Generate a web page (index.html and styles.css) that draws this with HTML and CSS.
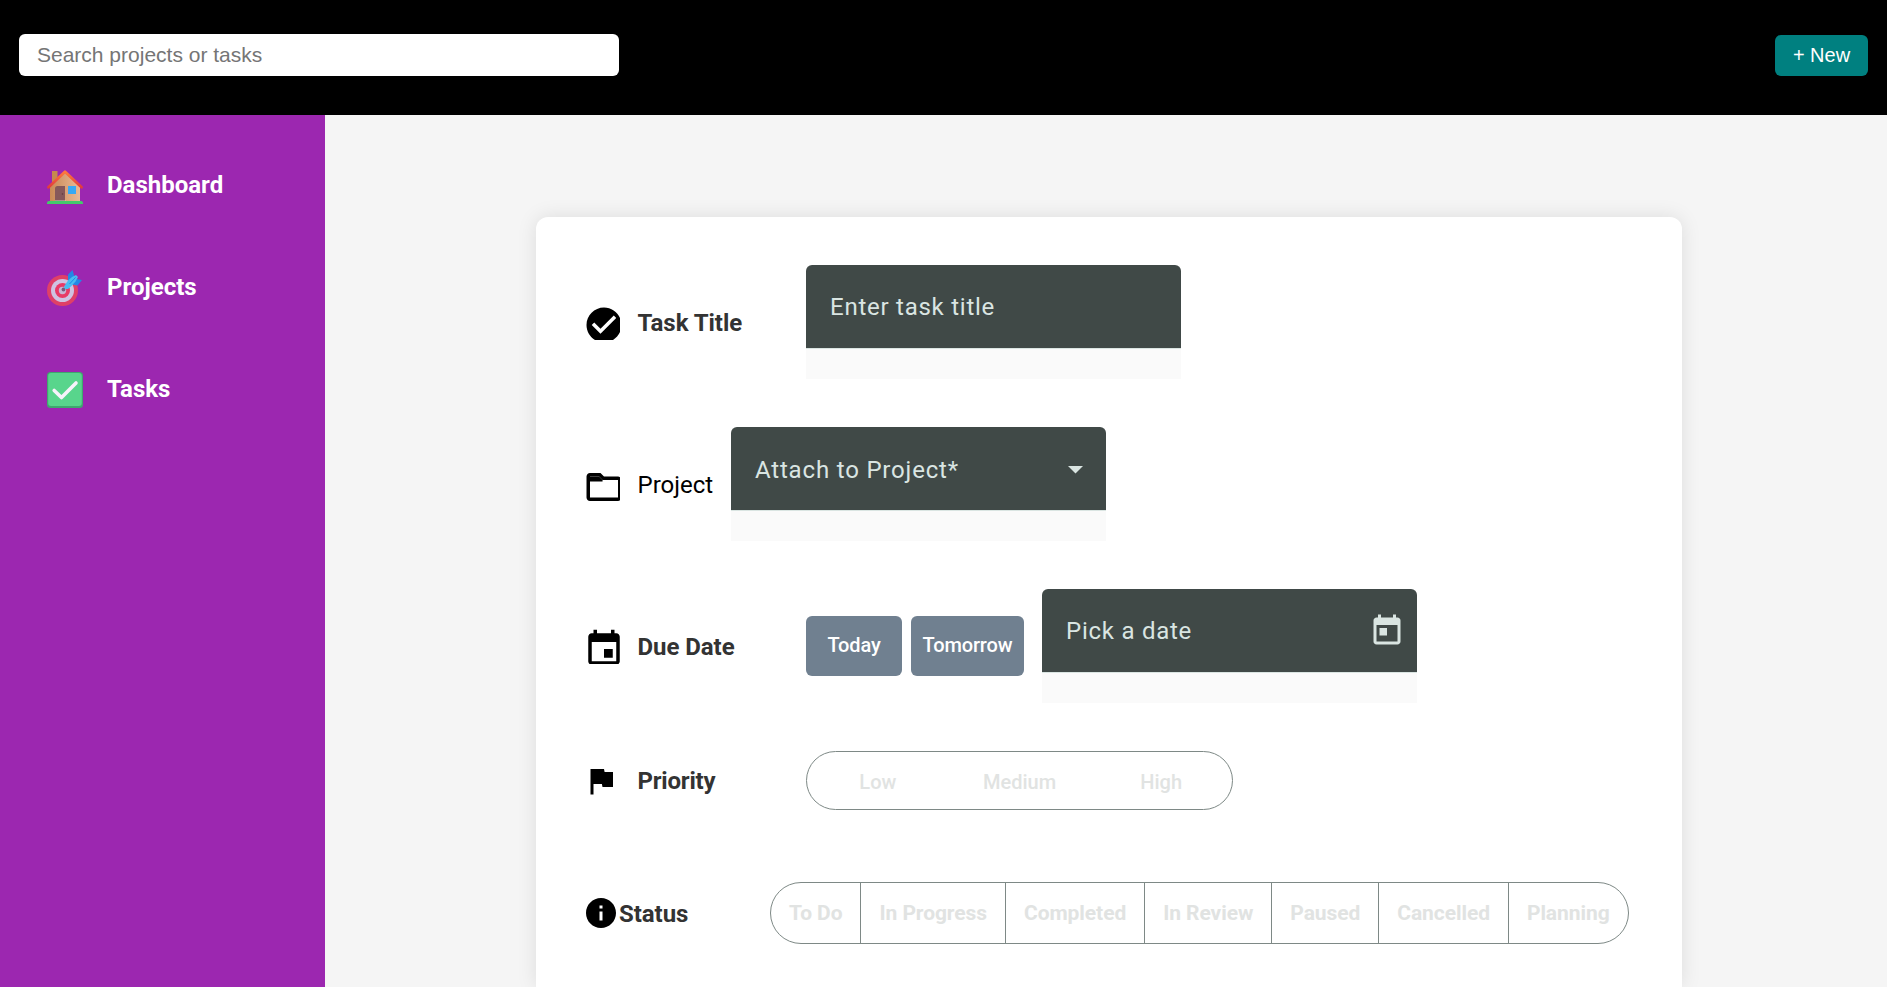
FILE: index.html
```html
<!DOCTYPE html>
<html lang="en">
<head>
<meta charset="utf-8">
<title>New Task</title>
<link rel="stylesheet" href="styles.css">
</head>
<body>
<header class="topbar">
  <input class="search" type="text" placeholder="Search projects or tasks">
  <button class="new-btn">+ New</button>
</header>
<div class="layout">
  <nav class="sidebar">
    <a class="nav-item">
      <svg class="nav-icon nav-home" viewBox="0 0 36 36">
        <defs>
          <linearGradient id="wall" x1="0" x2="1"><stop offset="0" stop-color="#c98a55"/><stop offset="1" stop-color="#eab996"/></linearGradient>
          <linearGradient id="roof" x1="0" x2="0" y1="0" y2="1"><stop offset="0" stop-color="#ff7a3c"/><stop offset="1" stop-color="#e23b3b"/></linearGradient>
        </defs>
        <rect x="5" y="2" width="5.500" height="13" fill="#c68a4e"/>
        <path d="M3 33V17L18 4l15 13v16z" fill="url(#wall)"/>
        <path d="M1.500 18.200L18 2.800l16.500 15.400" fill="none" stroke="url(#roof)" stroke-width="2.800" stroke-linecap="round" stroke-linejoin="round"/>
        <path d="M8 32V19.500Q8 17 10.500 17H18v15z" fill="#86595a"/>
        <circle cx="15.500" cy="25" r=".8" fill="#5c3a3c"/>
        <rect x="21" y="17" width="8" height="8" fill="#38a9f4"/>
        <path d="M8 31.500h11v1H8z" fill="#d9c9c4"/>
        <path d="M0 35v-1q0-2 2-2h32q2 0 2 2v1z" fill="#44c96b"/>
      </svg>
      <span>Dashboard</span>
    </a>
    <a class="nav-item">
      <svg class="nav-icon" viewBox="0 0 36 36">
        <circle cx="15.500" cy="20.500" r="15.500" fill="#df4067"/>
        <circle cx="15.500" cy="20.500" r="11.500" fill="#cfc3e2"/>
        <circle cx="15.500" cy="20.500" r="7.500" fill="#e83a66"/>
        <circle cx="15.500" cy="20.500" r="3.700" fill="#c8b5d4"/>
        <circle cx="16.500" cy="19.500" r="1.900" fill="#77597d"/>
        <path d="M21 11V4.500L25.500 0l2 7L22 14z" fill="#2487e5"/>
        <path d="M25 14.500L29.500 9l5.500 1-4.500 5.500z" fill="#2487e5"/>
        <path d="M17 16.500L21 10.500 25 7l4-2 2 2-2.500 4.500-4 4.500-3.500 3h-3z" fill="#4abcf1"/>
        <path d="M22.500 14l6-6.500" stroke="#1b8be8" stroke-width="1"/>
      </svg>
      <span>Projects</span>
    </a>
    <a class="nav-item">
      <svg class="nav-icon" viewBox="0 0 36 36">
        <rect width="36" height="36" rx="3.500" fill="#3fa66f"/>
        <rect x="1.200" y="1" width="33.600" height="33" rx="3" fill="#58d58c"/>
        <path d="M7.200 18.500l7.300 7 14.500-14.500" fill="none" stroke="#f7f2fb" stroke-width="3.600" stroke-linecap="round" stroke-linejoin="round"/>
      </svg>
      <span>Tasks</span>
    </a>
  </nav>
  <main class="content">
    <form class="card">
      <div class="row">
        <span class="icon"><svg class="glyph glyph-lg" viewBox="0 0 24 24"><path d="M12 2C6.480 2 2 6.480 2 12s4.480 10 10 10 10-4.480 10-10S17.520 2 12 2zm-2 15l-5-5 1.410-1.410L10 14.170l7.590-7.590L19 8l-9 9z"/></svg></span>
        <span class="label">Task Title</span>
        <div class="field"><div class="field-box"><span>Enter task title</span></div><div class="field-hint"></div></div>
      </div>
      <div class="row">
        <span class="icon"><svg class="glyph glyph-lg" viewBox="0 0 24 24"><path d="M9.170 6l2 2H20v10H4V6h5.170M10 4H4c-1.100 0-1.990.9-1.990 2L2 18c0 1.100.9 2 2 2h16c1.100 0 2-.9 2-2V8c0-1.100-.9-2-2-2h-8l-2-2z"/><path d="M4 6h5.170l2 2v.9H4z"/></svg></span>
        <span class="label label-plain">Project</span>
        <div class="field"><div class="field-box field-select"><span>Attach to Project*</span><svg class="arrow" viewBox="0 0 15 8"><path d="M0 0h15L7.500 7.500z"/></svg></div><div class="field-hint"></div></div>
      </div>
      <div class="row">
        <span class="icon"><svg class="glyph glyph-lg" viewBox="0 0 24 24"><path d="M17 12h-5v5h5v-5zM16 1v2H8V1H6v2H5c-1.110 0-1.990.9-1.990 2L3 19c0 1.100.89 2 2 2h14c1.100 0 2-.9 2-2V5c0-1.100-.9-2-2-2h-1V1h-2zm3 18H5V8h14v11z"/></svg></span>
        <span class="label label-due">Due Date</span>
        <div class="quick">
          <button type="button" class="day day-today">Today</button>
          <button type="button" class="day day-tomorrow">Tomorrow</button>
        </div>
        <div class="field"><div class="field-box field-date"><span>Pick a date</span><svg class="today" viewBox="0 0 24 24"><path d="M19 3h-1V1h-2v2H8V1H6v2H5c-1.110 0-1.990.9-1.990 2L3 19c0 1.100.89 2 2 2h14c1.100 0 2-.9 2-2V5c0-1.100-.9-2-2-2zm0 16H5V8h14v11zM7 10h5v5H7z"/></svg></div><div class="field-hint"></div></div>
      </div>
      <div class="row row-priority">
        <span class="icon"><svg class="glyph" viewBox="0 0 24 24"><path d="M14.400 6L14 4H5v17h2v-7h5.600l.4 2h7V6z"/></svg></span>
        <span class="label label-priority">Priority</span>
        <div class="pill priority"><span>Low</span><span>Medium</span><span>High</span></div>
      </div>
      <div class="row row-status">
        <span class="icon icon-tight"><svg class="glyph" viewBox="0 0 24 24"><path d="M12 2C6.480 2 2 6.480 2 12s4.480 10 10 10 10-4.480 10-10S17.520 2 12 2zm1 15h-2v-6h2v6zm0-8h-2V7h2v2z"/></svg></span>
        <span class="label label-status">Status</span>
        <div class="pill status"><span>To Do</span><span>In Progress</span><span>Completed</span><span>In Review</span><span>Paused</span><span>Cancelled</span><span>Planning</span></div>
      </div>
    </form>
  </main>
</div>
</body>
</html>
```
FILE: styles.css
```css
* { box-sizing: border-box; }
body { margin: 0; height: 987px; overflow: hidden; background: #f4f4f4; font-family: Roboto, sans-serif; font-size: 24px; }
.topbar { display: flex; align-items: center; justify-content: space-between; height: 115px; padding: 0 19px 5px; background: #000; }
.search { width: 600px; height: 42px; padding: 0 18px; border: 0; border-radius: 6px; background: #fff; font: 21px "Liberation Sans", Arial, sans-serif; }
.search::placeholder { color: #757575; }
.new-btn { width: 93px; height: 41px; padding: 0; border: 0; border-radius: 6px; background: #008080; color: #fff; font: 20px "Liberation Sans", Arial, sans-serif; }
.layout { display: flex; height: 872px; }
.sidebar { width: 325px; flex: none; padding: 36px 0 0 47px; background: #9c27b0; }
.nav-item { display: flex; align-items: center; gap: 24px; height: 68px; margin-bottom: 34px; color: #fff; font-weight: 700; }
.nav-icon { width: 36px; height: 36px; margin-top: 2px; fill: none; }
.nav-home { margin-top: 4px; }
.content { flex: 1; padding: 102px 0 0 211px; background: #f5f5f5; }
.card { width: 1146px; height: 770px; padding: 48px 0 0 47px; border-radius: 12px 12px 0 0; background: #fff; box-shadow: 0 0 20px rgba(0,0,0,.1); }
.row { display: flex; align-items: center; height: 114px; margin-bottom: 48px; }
.icon { width: 37px; height: 36px; flex: none; overflow: hidden; margin-right: 17.500px; }
.icon-tight { width: 36px; margin-right: 0; }
.glyph { display: block; width: 36px; height: 36px; fill: #000; }
.glyph-lg { width: 42px; height: 42px; margin-left: .4px; }
.label { width: 168.500px; padding-top: 2px; flex: none; color: #333; font-weight: 700; letter-spacing: -.05px; white-space: nowrap; }
.label-plain { width: 93.500px; color: #000; font-weight: 400; letter-spacing: 0; }
.label-priority { padding-top: 0; letter-spacing: -.2px; }
.label-status { width: 151px; }
.field { width: 375px; flex: none; }
.field-box { display: flex; align-items: center; justify-content: space-between; height: 84px; padding: 0 24px; border-radius: 6px 6px 0 0; background: #404947; border-bottom: 1px solid #dae5e2; color: #dae5e2; letter-spacing: .75px; }
.field-hint { height: 30px; background: #fafafa; }
.field-select { padding: 2px 23.500px 0 24px; letter-spacing: .82px; }
.arrow { width: 15px; height: 8px; fill: #dae5e2; }
.field-date { padding-right: 12px; }
.today { width: 36px; height: 36px; fill: #dae5e2; }
.quick { display: flex; gap: 9px; margin-right: 18px; }
.day { height: 60px; padding: 0 0 2px; border: 0; border-radius: 6px; background: #708090; color: #fff; font: 500 20px Roboto, sans-serif; letter-spacing: -.15px; }
.day-today { width: 96px; }
.day-tomorrow { width: 113px; }
.pill { display: flex; border: 1px solid #7e8986; border-radius: 31px; color: #e1e3e2; font-size: 20px; font-weight: 500; }
.pill span { display: flex; align-items: center; justify-content: center; }
.row-priority { height: 60px; margin-bottom: 71px; }
.priority { width: 427px; height: 59px; margin-bottom: 1px; }
.priority span { flex: 1; padding-top: 3px; }
.row-status { height: 62px; }
.status { height: 62px; font-size: 21px; font-weight: 700; letter-spacing: -.07px; }
.status span { padding: 0 18px; border-left: 1px solid #7e8986; }
.status span:first-child { border-left: 0; }
```
